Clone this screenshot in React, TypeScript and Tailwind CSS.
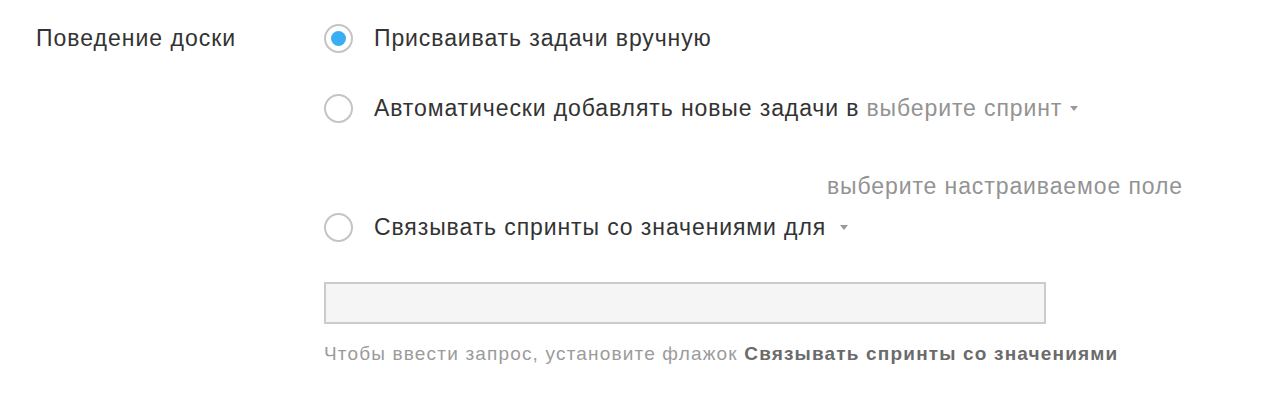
const font = { fontFamily: '"Liberation Sans", Arial, sans-serif' };

const Radio = ({ checked }: { checked?: boolean }) => (
  <span className="flex h-[29px] w-[29px] shrink-0 items-center justify-center rounded-full border-2 border-[#c4c4c4] bg-white">
    {checked && <span className="h-[15px] w-[15px] rounded-full bg-[#3aaef5]" />}
  </span>
);

const Caret = ({ className = '' }: { className?: string }) => (
  <span
    className={`inline-block h-0 w-0 border-x-[4px] border-t-[5px] border-x-transparent border-t-[#9a9a9a] ${className}`}
  />
);

export default function App() {
  return (
    <div className="flex h-[415px] w-[1280px] bg-white text-[#333]" style={font}>
      <div className="w-[324px] shrink-0 pl-[36px] pt-[25px] text-[23px] leading-[26px] tracking-[1px]">
        Поведение доски
      </div>

      <div className="flex flex-col pt-[24px] text-[23px] tracking-[0.9px]">
        <label className="flex h-[29px] items-center gap-[21px]">
          <Radio checked />
          <span>Присваивать задачи вручную</span>
        </label>

        <label className="mt-[41px] flex h-[29px] items-center gap-[21px]">
          <Radio />
          <span className="flex items-center">
            Автоматически добавлять новые задачи в
            <span className="ml-[7px] text-[#939393]">выберите спринт</span>
            <Caret className="ml-[8px]" />
          </span>
        </label>

        <div className="mt-[50px] flex h-[26px] w-[859px] items-center justify-end text-[#939393]">
          выберите настраиваемое поле
        </div>

        <label className="mt-[14px] flex h-[29px] items-center gap-[21px]">
          <Radio />
          <span className="flex items-center">
            Связывать спринты со значениями для
            <Caret className="ml-[14px]" />
          </span>
        </label>

        <input
          type="text"
          className="mt-[40px] h-[42px] w-[722px] border-2 border-[#cbcbcb] bg-[#f5f5f5] outline-none"
        />

        <p className="mt-[18px] text-[19px] leading-[24px] tracking-[1.17px] text-[#9b9b9b]">
          Чтобы ввести запрос, установите флажок <b className="text-[#6b6b6b]">Связывать спринты со значениями</b>
        </p>
      </div>
    </div>
  );
}
